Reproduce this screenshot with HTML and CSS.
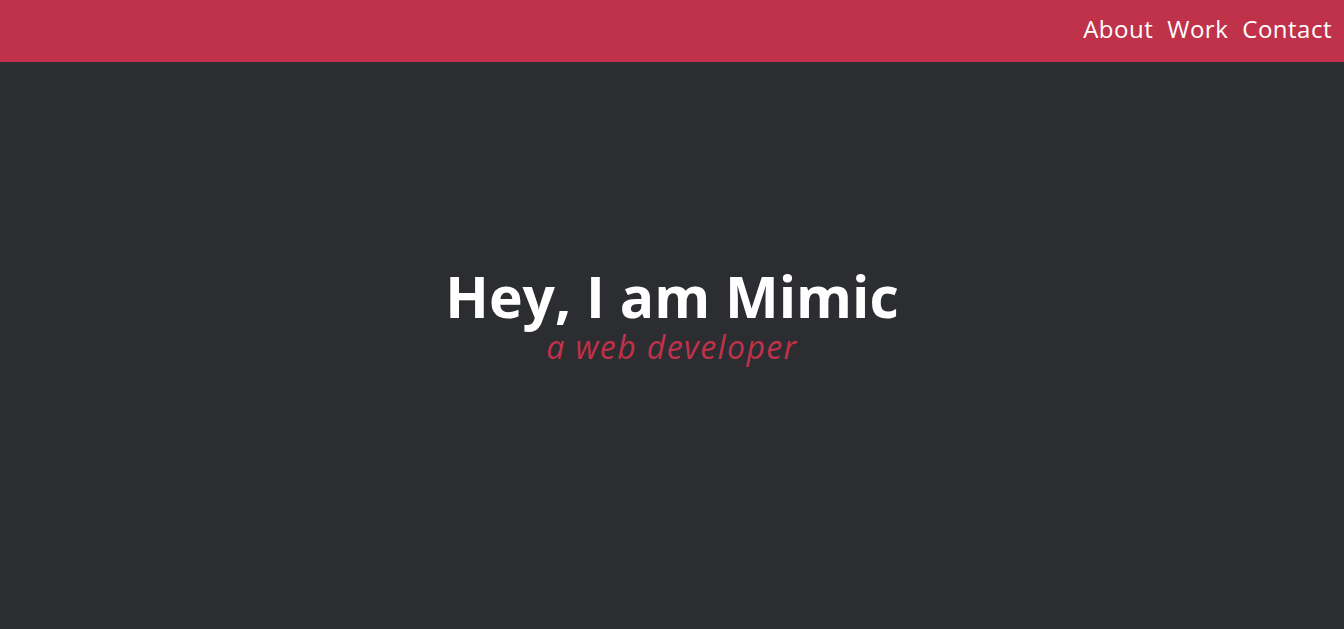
FILE: index.html
```html
<!DOCTYPE html>
<html lang="en">
<head>
<meta charset="utf-8">
<title>Mimic</title>
<link rel="stylesheet" href="styles.css">
</head>
<body>
<header class="topbar">
  <nav class="nav">
    <a class="nav-link" href="#about">About</a>
    <a class="nav-link" href="#work">Work</a>
    <a class="nav-link" href="#contact">Contact</a>
  </nav>
</header>
<main class="hero">
  <h1 class="hero-title">Hey, I am Mimic</h1>
  <p class="hero-sub">a web developer</p>
</main>
</body>
</html>
```
FILE: styles.css
```css
html, body {
  margin: 0;
  padding: 0;
  height: 100%;
}
body {
  background: #2c2d30;
  font-family: "Open Sans", "DejaVu Sans", sans-serif;
  overflow: hidden;
}
.topbar {
  height: 62px;
  box-sizing: border-box;
  padding: 0 12px 6px;
  background: #c0314a;
  display: flex;
  justify-content: flex-end;
  align-items: center;
}
.nav {
  display: flex;
  gap: 14px;
}
.nav-link {
  color: #ffffff;
  text-decoration: none;
  font-size: 24px;
  letter-spacing: 0.5px;
}
.hero {
  height: calc(100vh - 62px);
  box-sizing: border-box;
  padding-bottom: 59px;
  display: flex;
  flex-direction: column;
  align-items: center;
  justify-content: center;
}
.hero-title {
  margin: 0;
  color: #ffffff;
  font-size: 57px;
  font-weight: bold;
  line-height: 58px;
}
.hero-sub {
  margin: 3px 0 0;
  color: #c0314a;
  font-size: 32px;
  font-style: italic;
  letter-spacing: 1.4px;
  line-height: 38px;
}
```
